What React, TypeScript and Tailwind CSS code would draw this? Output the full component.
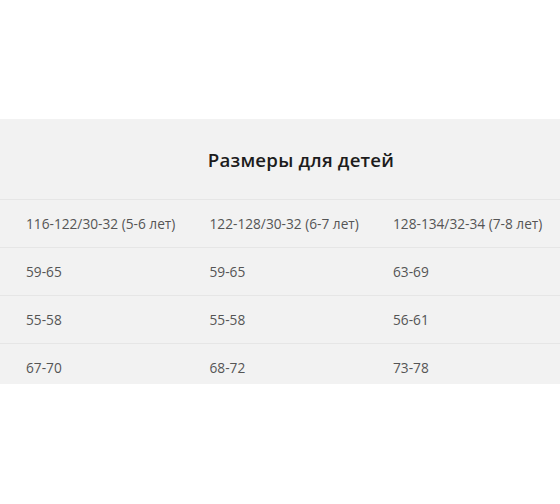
import React from "react";

const rows: string[][] = [
  ["116-122/30-32 (5-6 лет)", "122-128/30-32 (6-7 лет)", "128-134/32-34 (7-8 лет)"],
  ["59-65", "59-65", "63-69"],
  ["55-58", "55-58", "56-61"],
  ["67-70", "68-72", "73-78"],
];

export default function App() {
  return (
    <div className="w-[560px] h-[504px] bg-white overflow-hidden" style={{ fontFamily: '"Open Sans", "Liberation Sans", sans-serif' }}>
      <div className="h-[119px]" />
      <div className="h-[265px] bg-[#f2f2f2] overflow-hidden">
        <div className="w-[602px]">
          <div className="h-[81px] flex items-center justify-center pt-[2px] border-b border-[#e6e6e6]">
            <span className="text-[18.7px] font-semibold text-[#1c1c1c] tracking-[0.2px]">Размеры для детей</span>
          </div>
          {rows.map((r, i) => (
            <div key={i} className="h-[48px] flex items-center pt-[2px] border-b border-[#e6e6e6]">
              {r.map((c, j) => (
                <div key={j} className="w-[183.5px] pl-[26px] text-[13.7px] text-[#555555] whitespace-nowrap">
                  {c}
                </div>
              ))}
            </div>
          ))}
        </div>
      </div>
    </div>
  );
}
